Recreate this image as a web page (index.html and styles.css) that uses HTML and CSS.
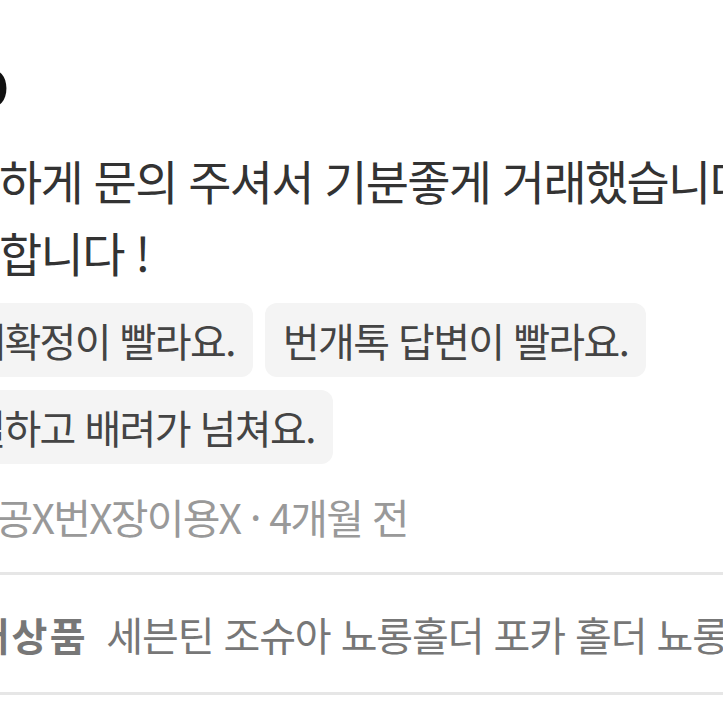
FILE: index.html
```html
<!DOCTYPE html>
<html lang="ko">
<head>
    <meta charset="UTF-8">
    <meta name="viewport" content="width=device-width, initial-scale=1.0">
    <title>거래 후기</title>
    <link rel="stylesheet" href="styles.css">
</head>
<body>
    <div class="page">
        <article class="review">
            <h2 class="author">KO</h2>
            <p class="content">친절하게 문의 주셔서 기분좋게 거래했습니다.<br>감사합니다 !</p>
            <ul class="tags">
                <li class="tag">거래확정이 빨라요.</li>
                <li class="tag">번개톡 답변이 빨라요.</li>
                <li class="tag">친절하고 배려가 넘쳐요.</li>
            </ul>
            <p class="meta">이X공X번X장이용X · 4개월 전</p>
        </article>
        <section class="product">
            <strong class="product-label">거래상품</strong>
            <span class="product-name">세븐틴 조슈아 뇨롱홀더 포카 홀더 뇨롱 인형</span>
        </section>
    </div>
</body>
</html>
```

FILE: styles.css
```css
html, body {
    margin: 0;
    padding: 0;
    background: #fff;
    overflow: hidden;
}
body {
    font-family: "Noto Sans CJK KR", "Noto Sans", sans-serif;
    color: #333;
}
.page {
    margin-left: -84px;
    width: 900px;
}
.review {
    padding-top: 55px;
}
.author {
    margin: 0;
    padding-left: 20px;
    font-size: 50px;
    line-height: 60px;
    font-weight: 900;
    color: #111;
}
.content {
    margin: 29px 0 0;
    font-size: 47px;
    line-height: 72px;
    letter-spacing: -1.7px;
    white-space: nowrap;
    color: #333;
}
.tags {
    list-style: none;
    margin: 15px 0 0;
    padding: 0;
    width: 807px;
    display: flex;
    flex-wrap: wrap;
    gap: 13px 12px;
}
.tag {
    background: #f4f4f4;
    border-radius: 12px;
    padding: 12px 18px;
    font-size: 40px;
    line-height: 50px;
    letter-spacing: -1.6px;
    color: #444;
    white-space: nowrap;
}
.meta {
    margin: 27px 0 0;
    padding-left: 22px;
    font-size: 41px;
    line-height: 50px;
    letter-spacing: -1.8px;
    color: #999;
    white-space: nowrap;
}
.product {
    margin-top: 31px;
    border-top: 3px solid #e6e6e6;
    border-bottom: 3px solid #e6e6e6;
    padding: 34px 0 33px 19px;
    font-size: 40px;
    line-height: 50px;
    letter-spacing: -1.1px;
    color: #777;
    white-space: nowrap;
}
.product-label {
    font-weight: 700;
    font-size: 39px;
    letter-spacing: 2.4px;
    margin-right: 8px;
}
```
